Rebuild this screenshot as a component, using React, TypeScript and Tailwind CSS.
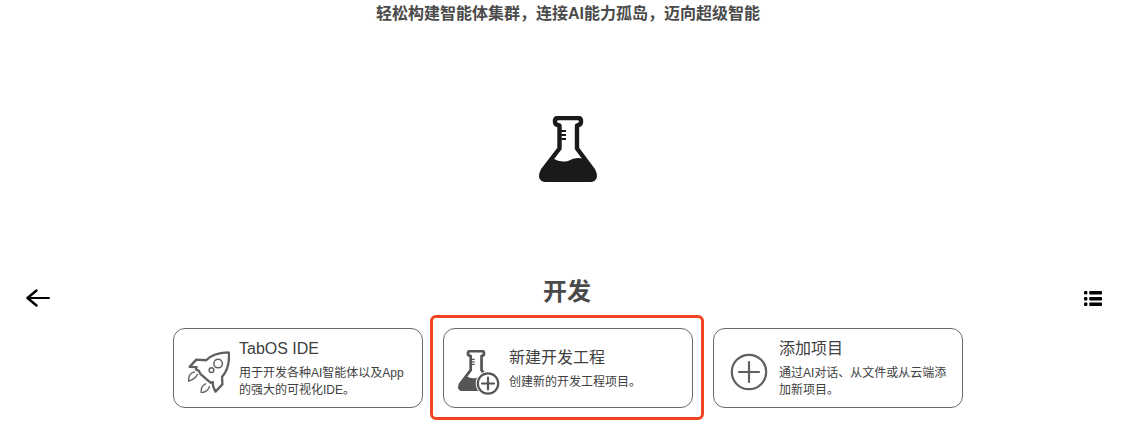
import type { ReactNode } from "react";

function FlaskShape() {
  return (
    <>
      <path
        d="M19 2H39Q42 2 42 5V6Q42 9 38 9.5V32.5L54 54Q59 64 50 64H8Q-1 64 4 54L20.5 32.5V9.5Q16 9 16 6V5Q16 2 19 2Z"
        fill="none"
        stroke="currentColor"
        strokeWidth="4.4"
        strokeLinejoin="round"
      />
      <path d="M13 42Q22 47 29 45Q37 40 45 43L54 55Q58 64 50 64H8Q0 64 4 55Z" fill="currentColor" />
      <path d="M20 15H27M20 19H27M20 23H27" stroke="currentColor" strokeWidth="2" />
    </>
  );
}

function FlaskIcon() {
  return (
    <svg viewBox="0 0 58 66" className="h-[66px] w-[58px] text-[#1a1a1a]" aria-hidden="true">
      <FlaskShape />
    </svg>
  );
}

function RocketIcon() {
  return (
    <svg viewBox="24 31 127 129" className="w-[42px]" fill="none" stroke="currentColor" aria-hidden="true">
      <path
        d="M144 35C120 36 93 43 79 59L49 57L29 79L50 80L48 87L57 91L62 101L92 127L99 125L100 138L107 154L128 132L127 109C143 92 149 66 148 39Q148 35 144 35Z"
        strokeWidth="7"
        strokeLinejoin="round"
      />
      <circle cx="115" cy="69" r="13" strokeWidth="4.5" />
      <circle cx="95" cy="89" r="7" strokeWidth="4.5" />
      <path d="M45 94C31 96 25 106 26 122C38 119 48 113 53 100" strokeWidth="4" />
      <path d="M79 130C67 134 63 144 64 158C76 155 87 150 89 137" strokeWidth="4" />
    </svg>
  );
}

function NewProjectIcon() {
  return (
    <svg viewBox="0 0 42 45" className="w-[42px] text-[#555555]" aria-hidden="true">
      <g transform="scale(.62)">
        <FlaskShape />
      </g>
      <circle cx="30" cy="33.5" r="12.3" fill="white" />
      <circle cx="30" cy="33.5" r="10.2" fill="none" stroke="currentColor" strokeWidth="2.2" />
      <path d="M24 33.5H36M30 27.5V39.5" stroke="currentColor" strokeWidth="2.2" strokeLinecap="round" />
    </svg>
  );
}

function AddIcon() {
  return (
    <svg viewBox="0 0 38 38" className="w-[38px]" fill="none" stroke="currentColor" strokeWidth="2.2" aria-hidden="true">
      <circle cx="19" cy="19" r="17.2" />
      <path d="M9 19H29M19 9V29" strokeLinecap="round" />
    </svg>
  );
}

type CardProps = {
  title: string;
  text: string;
  icon: ReactNode;
  highlighted?: boolean;
};

function ProjectCard({ title, text, icon, highlighted }: CardProps) {
  return (
    <div className="relative w-[250px]">
      <button
        type="button"
        className="flex min-h-20 w-full items-center gap-2 rounded-xl border border-[#636973] bg-white pr-3 pl-3.5 text-left text-[#404040]"
      >
        <span className="flex w-[43px] shrink-0 pt-2 text-[#606060]">
          <span className="flex w-[42px] justify-center">{icon}</span>
        </span>
        <span className="flex flex-1 flex-col gap-1">
          <span className="text-base leading-6">{title}</span>
          <span className="text-xs leading-[17px]">{text}</span>
        </span>
      </button>
      {highlighted && (
        <span className="pointer-events-none absolute -top-[13px] -right-[11px] -bottom-3 -left-[13px] rounded-md border-3 border-[#f04423]" />
      )}
    </div>
  );
}

export default function App() {
  return (
    <main className="bg-white pt-0.5 pb-6 font-['Liberation_Sans','Noto_Sans_CJK_SC',sans-serif] text-[#404040]">
      <header className="flex flex-col items-center gap-[90px] pl-[11px]">
        <p className="text-base leading-6 font-bold text-[#4a4a4a]">轻松构建智能体集群，连接AI能力孤岛，迈向超级智能</p>
        <FlaskIcon />
      </header>

      <section className="mt-[94px]">
        <div className="flex items-end justify-between pr-[23px] pl-[26px]">
          <button type="button" aria-label="返回" className="flex h-5 w-6 items-center text-black">
            <svg viewBox="0 0 24 18" className="w-6" fill="none" stroke="currentColor" strokeLinecap="round" strokeLinejoin="round">
              <path d="M2 9H23" strokeWidth="2" />
              <path d="M10.5 1.5L1.5 9L10.5 16.5" strokeWidth="2.4" />
            </svg>
          </button>
          <h1 className="text-2xl leading-8 font-bold text-[#4a4a4a]">开发</h1>
          <button type="button" aria-label="列表" className="flex h-5 w-[18px] items-center text-black">
            <svg viewBox="0 0 18 16" className="w-[18px]" fill="currentColor">
              <rect x="0" y="1" width="3.4" height="3.4" rx="1" />
              <rect x="0" y="7" width="3.4" height="3.4" rx="1" />
              <rect x="0" y="12.6" width="3.4" height="3.4" rx="1" />
              <rect x="5.2" y="1" width="12.8" height="3.4" rx="1" />
              <rect x="5.2" y="7" width="12.8" height="3.4" rx="1" />
              <rect x="5.2" y="12.6" width="12.8" height="3.4" rx="1" />
            </svg>
          </button>
        </div>

        <div className="mt-5 flex flex-wrap justify-center gap-5 pl-[11px]">
          <ProjectCard title="TabOS IDE" text="用于开发各种AI智能体以及App的强大的可视化IDE。" icon={<RocketIcon />} />
          <ProjectCard title="新建开发工程" text="创建新的开发工程项目。" icon={<NewProjectIcon />} highlighted />
          <ProjectCard title="添加项目" text="通过AI对话、从文件或从云端添加新项目。" icon={<AddIcon />} />
        </div>
      </section>
    </main>
  );
}
